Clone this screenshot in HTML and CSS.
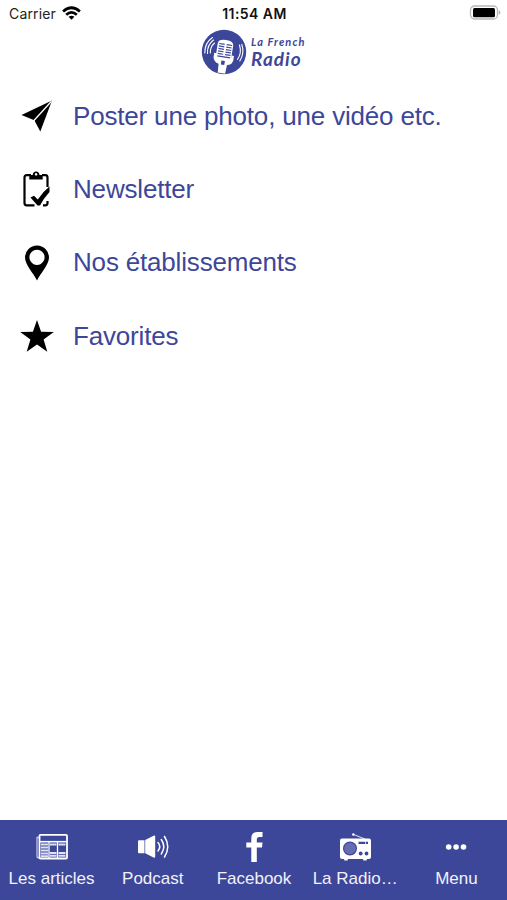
FILE: index.html
```html
<!DOCTYPE html>
<html lang="fr">
<head>
<meta charset="utf-8">
<title>La French Radio</title>
<link rel="stylesheet" href="styles.css">
</head>
<body>
<div class="app">
  <div class="status">
    <div class="carrier"><span>Carrier</span>
      <svg class="wifi" viewBox="0 0 19 14"><g fill="none" stroke="#000" stroke-width="2.7"><path d="M1.1 5.5Q9.5-2 17.9 5.5"/><path d="M4.200 8.800Q9.500 4 14.800 8.800"/></g><path d="M6.600 10.800Q9.500 8.500 12.400 10.800L9.500 13.800Z"/></svg>
    </div>
    <time class="clock">11:54 AM</time>
    <svg class="battery" viewBox="0 0 32 16"><rect x="1.500" y="1" width="27" height="13" rx="4" fill="#fff" stroke="#b8b8b8" stroke-width="1.300"/><rect x="4" y="3" width="22" height="9.200" rx="1.500"/><path d="M29.700 5.200q1.700.5 1.700 2.300t-1.700 2.300z" fill="#b8b8b8"/></svg>
  </div>
  <header class="brand">
    <svg class="mic" viewBox="0 0 46 46">
      <circle cx="23" cy="23" r="22.200" fill="#3d4799"/>
      <g fill="none" stroke="#fff" stroke-width="1.100" stroke-linecap="round"><path d="M3.800 24Q3.500 14 11.500 8.500"/><path d="M6.500 24.500Q6 16 12.500 11"/><path d="M9.300 24Q9 18 13.500 14"/><path d="M38.500 16Q41 24 36.500 30.500"/><path d="M40.800 15.500Q43.800 24 38.800 32"/></g>
      <g transform="rotate(9 24 23)">
        <path d="M15.500 15.500q0-4.500 7.800-4.500t7.800 4.500v13.500H15.500z" fill="#fff"/>
        <path d="M13.500 25.500h2.500v2h15v-2h2.500v4.500q-1 5-5.500 5.500l-.5 9H20l-.5-9q-5-.7-6-5.500z" fill="#fff"/>
        <path d="M17 15.500h5.500m2 0H30M17 18h5.500m2 0H30M17 20.500h5.500m2 0H30M17 23h5.500m2 0H30M17 25.500h5.500m2 0H30M17 28h13" stroke="#3d4799" stroke-width="1.200"/>
        <path d="M21.800 32h3.500v4h-3.500z" fill="#3d4799"/>
      </g>
    </svg>
    <div class="wordmark"><span class="small">La French</span><span class="large">Radio</span></div>
  </header>
  <nav class="list">
    <a class="row"><svg class="icon" viewBox="0 0 36 36"><path d="M2.500 17 33 2.500 21.300 33.500 15.300 22.300Z"/><path d="M14.500 23 32.500 3.200" stroke="#fff" stroke-width="1.300"/></svg><span>Poster une photo, une vidéo etc.</span></a>
    <a class="row"><svg class="icon" viewBox="0 0 36 36"><path d="M12 4.200H7.800Q5.500 4.200 5.500 6.500V32Q5.500 34.300 7.800 34.300H15.500M23 4.200h3.200q2.300 0 2.300 2.300V16M28.500 30v2q0 2.300-2.300 2.300H24" fill="none" stroke="#000" stroke-width="2.200"/><path fill-rule="evenodd" d="M10.300 8.500V5.300Q10.300 4 12 4H13.700Q14 .5 17.100.5T20.500 4h1.700q1.500 0 1.500 1.300V8.500ZM17.100 2a1.300 1.300 0 1 0 .01 0Z"/><path d="M11.500 26.500 15 24.800 18.800 28.500Q24 20.500 30.500 15.500V21Q24.500 27.500 21 34.500H18.500Z"/></svg><span>Newsletter</span></a>
    <a class="row"><svg class="icon" viewBox="0 0 36 36"><path fill-rule="evenodd" d="M18 35.500C14.500 28.500 6 19.500 6 12.600A12 12 0 0 1 30 12.600C30 19.500 21.500 28.500 18 35.500ZM18 4.700a7.600 7.600 0 1 0 .01 0Z"/></svg><span>Nos établissements</span></a>
    <a class="row"><svg class="icon" viewBox="0 0 36 36"><path d="m18 2 4.100 11.800L34.800 14 24.600 21.600 28.300 33.800 18 26.500 7.700 33.800 11.400 21.600 1.200 14l12.700-.2Z"/></svg><span>Favorites</span></a>
  </nav>
  <footer class="tabs">
    <a class="tab"><svg viewBox="0 0 36 36"><path d="M4.800 8.500H3v18.500q0 2 2 2" fill="none" stroke="#bfc4e6" stroke-width="1.300"/><rect x="5.500" y="5.800" width="27.500" height="23.700" rx="1" fill="none" stroke="#fff" stroke-width="1.800"/><path d="M6 12.700h27" stroke="#fff" stroke-width="1.600"/><path d="M7 15.500h7M16 15.500h6.500M24.500 15.500h7M7 18.500h7M7 21.500h7M7 24.500h7M7 27.300h7M16 24h6.500M16 26.800h6.500M24.500 24h7M24.500 26.800h7" stroke="#dfe2f5" stroke-width="1.900"/><path d="M15 13v16M23.500 13v16" stroke="#fff" stroke-width="1.300"/></svg><span>Les articles</span></a>
    <a class="tab"><svg viewBox="0 0 36 36"><path fill="#fff" d="M3 12.200q0-.9 1-.9h5.500v12.900H4q-1 0-1-.9zM10.200 10.900 18.500 6.800q1.700-.8 1.700.8v20q0 1.600-1.700.8l-8.300-4.200z"/><g fill="none" stroke="#fff" stroke-width="1.500" stroke-linecap="round"><path d="M23 13.500q3.500 4 0 8.500"/><path d="M26.300 10.500q5 7.200 0 14.500"/><path d="M29.500 7.500q6.500 10.300 0 20.500"/></g></svg><span>Podcast</span></a>
    <a class="tab"><svg viewBox="0 0 36 36"><path fill="#fff" d="M15.300 33V18.500H10.300V13.500h5V9.500Q15.300 3 21.500 3H26.500V8H23.500Q20.800 8 20.800 10.500V13.500H26.500l-.5 5h-5.200V33Z"/></svg><span>Facebook</span></a>
    <a class="tab"><svg viewBox="0 0 36 36"><path d="M16.500 5.500 28 10" stroke="#cdd1ed" stroke-width="1.100"/><circle cx="16.300" cy="5.500" r="1.200" fill="#fff"/><rect x="3" y="9.500" width="31" height="20.500" rx="2" fill="#fff"/><path fill="#fff" d="M6.500 29h4.800l-.8 2.500h-3zM25.500 29h4.800l-.8 2.500h-3z"/><circle cx="13" cy="19.500" r="7" fill="#3d4799"/><circle cx="13" cy="19.500" r="5.800" fill="#656db0"/><path d="M21.500 13.800h9.500" stroke="#3d4799" stroke-width="2.200" stroke-dasharray="6.500 .7"/><g fill="#3d4799"><circle cx="23.700" cy="24.500" r="1.900"/><circle cx="29.500" cy="24.500" r="1.900"/></g></svg><span>La Radio…</span></a>
    <a class="tab"><svg viewBox="0 0 36 36"><g fill="#fff"><circle cx="10.700" cy="18" r="2.800"/><circle cx="18.100" cy="18" r="2.800"/><circle cx="25.500" cy="18" r="2.800"/></g></svg><span>Menu</span></a>
  </footer>
</div>
</body>
</html>
```
FILE: styles.css
```css
* { box-sizing: border-box; }
body { margin: 0; background: #fff; font-family: "Liberation Sans", Arial, sans-serif; }
svg { display: block; flex: none; }
.app { height: 900px; display: flex; flex-direction: column; }
.status { height: 27px; flex: none; display: grid; grid-template-columns: 1fr auto 1fr; align-items: center; padding: 0 6px 0 9px; font-family: Inter, sans-serif; color: #222; }
.carrier { display: flex; align-items: center; gap: 6px; font-size: 14px; letter-spacing: .15px; }
.wifi { width: 19px; height: 14px; margin-top: -2px; }
.clock { font-size: 14px; font-weight: 600; color: #111; letter-spacing: .45px; margin-right: 1px; }
.battery { width: 32px; height: 16px; justify-self: end; margin-top: -1px; }
.brand { height: 52.500px; flex: none; display: flex; padding: 2px 0 0 201px; }
.mic { width: 46px; height: 46px; }
.wordmark { display: flex; flex-direction: column; padding: 6px 0 0 4px; color: #3d4799; font-family: Lato, sans-serif; font-style: italic; font-weight: 700; white-space: nowrap; }
.small { font-size: 11px; line-height: 14px; letter-spacing: 1.100px; }
.large { font-size: 19px; line-height: 19px; letter-spacing: 1px; font-weight: 700; }
.list { flex: 1; }
.row { display: flex; align-items: center; gap: 18px; height: 73.300px; padding-left: 19px; color: #3d4799; font-size: 26px; letter-spacing: -.18px; white-space: nowrap; }
.icon { width: 36px; height: 36px; }
.tabs { height: 80.500px; flex: none; display: grid; grid-template-columns: repeat(5, 1fr); padding-left: 1px; background: #3d4799; }
.tab { display: flex; flex-direction: column; align-items: center; padding-top: 9.500px; color: #f1f2fb; font-size: 17px; line-height: 20px; gap: 4px; white-space: nowrap; }
.tab svg { width: 36px; height: 36px; }
```
